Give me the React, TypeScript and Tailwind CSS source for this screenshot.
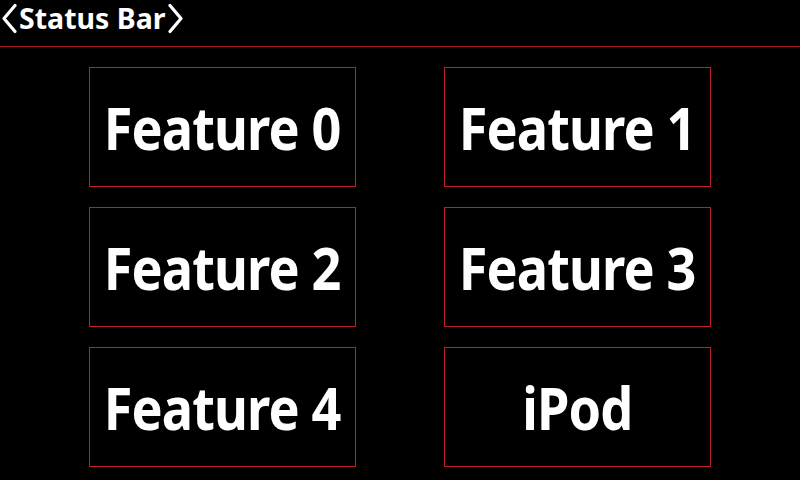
import React from 'react';

const features = ['Feature 0', 'Feature 1', 'Feature 2', 'Feature 3', 'Feature 4', 'iPod'];

function Chevron({ dir }: { dir: 'left' | 'right' }) {
  return <svg width="16" height="31" viewBox="0 0 16 31" fill="none" stroke="white" strokeWidth="3.2" strokeLinecap="round" strokeLinejoin="round">
      {dir === 'left' ? <polyline points="14,2.5 3,15.5 14,28.5" /> : <polyline points="2,2.5 13,15.5 2,28.5" />}
    </svg>;
}

export default function App() {
  return <div className="w-[800px] h-[480px] bg-black overflow-hidden flex flex-col" style={{ fontFamily: '"Noto Sans", "Open Sans", sans-serif' }}>
      <div className="h-[47px] flex items-start pl-[1px] border-b border-[#a81c24]">
        <div className="flex items-center gap-[2px] mt-[3px]">
          <Chevron dir="left" />
          <span className="text-white font-bold text-[28.5px] leading-none whitespace-nowrap">Status Bar</span>
          <Chevron dir="right" />
        </div>
      </div>
      <div className="grid grid-cols-[267px_267px] gap-x-[88px] gap-y-[20px] pl-[89px] pt-[20px]">
        {features.map(f => <div key={f} className="h-[120px] border border-[#c0202a] flex items-center justify-center">
            <span className="inline-block whitespace-nowrap text-white font-bold text-[60px] leading-none tracking-[-1px] scale-x-[0.87]">{f}</span>
          </div>)}
      </div>
    </div>;
}
